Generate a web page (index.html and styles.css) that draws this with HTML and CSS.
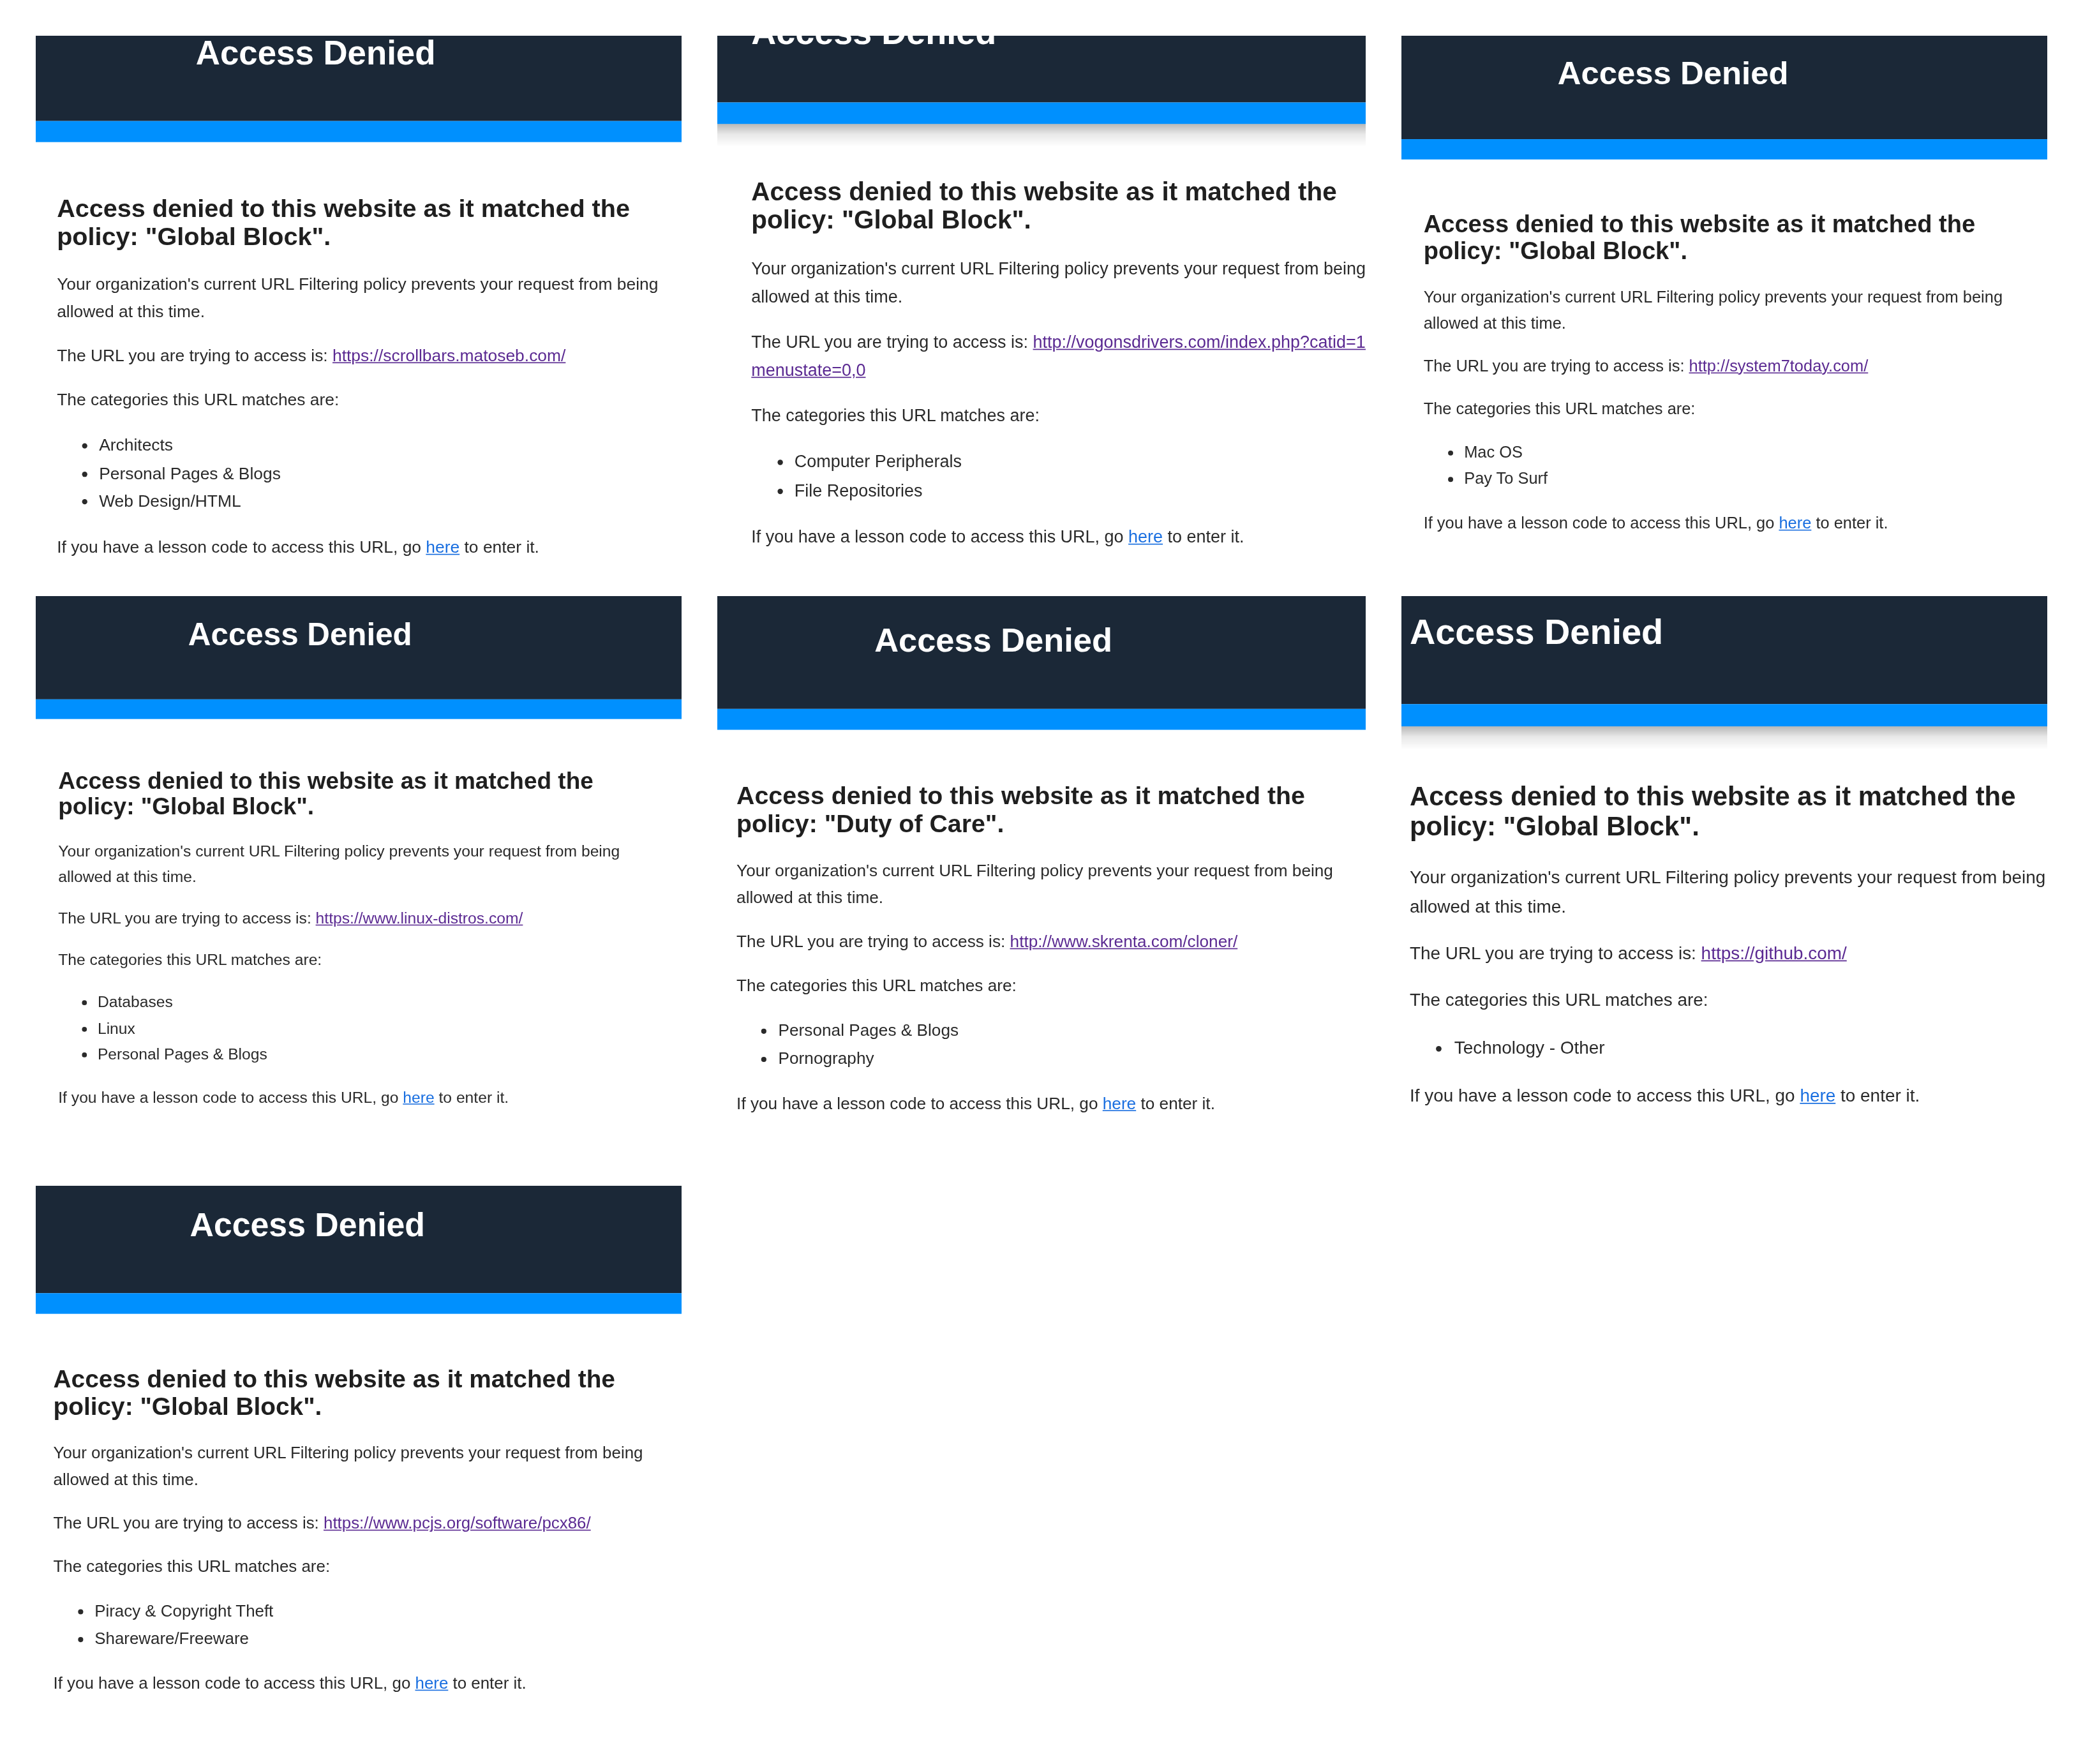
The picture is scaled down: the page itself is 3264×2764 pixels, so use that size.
FILE: index.html
```html
<!DOCTYPE html>
<html lang="en">
<head>
<meta charset="utf-8">
<title>Access Denied – screenshots</title>
<link rel="stylesheet" href="styles.css">
</head>
<body>
<main class="collage">

  <section class="shot shot-1">
    <div class="page">
      <header class="hdr"><h1 class="hdr-title">Access Denied</h1></header>
      <div class="bar"></div>
      <div class="content">
        <h2 class="msg">Access denied to this website as it matched the policy: "Global Block".</h2>
        <p>Your organization's current URL Filtering policy prevents your request from being allowed at this time.</p>
        <p>The URL you are trying to access is: <a class="url" href="#">https://scrollbars.matoseb.com/</a></p>
        <p>The categories this URL matches are:</p>
        <ul>
          <li>Architects</li>
          <li>Personal Pages &amp; Blogs</li>
          <li>Web Design/HTML</li>
        </ul>
        <p>If you have a lesson code to access this URL, go <a class="here" href="#">here</a> to enter it.</p>
      </div>
    </div>
  </section>

  <section class="shot shot-2">
    <div class="page">
      <header class="hdr"><h1 class="hdr-title">Access Denied</h1></header>
      <div class="bar"></div>
      <div class="content">
        <h2 class="msg">Access denied to this website as it matched the policy: "Global Block".</h2>
        <p>Your organization's current URL Filtering policy prevents your request from being allowed at this time.</p>
        <p>The URL you are trying to access is: <a class="url" href="#">http://vogonsdrivers.com/index.php?catid=1&amp;<wbr>menustate=0,0</a></p>
        <p>The categories this URL matches are:</p>
        <ul>
          <li>Computer Peripherals</li>
          <li>File Repositories</li>
        </ul>
        <p>If you have a lesson code to access this URL, go <a class="here" href="#">here</a> to enter it.</p>
      </div>
    </div>
  </section>

  <section class="shot shot-3">
    <div class="page">
      <header class="hdr"><h1 class="hdr-title">Access Denied</h1></header>
      <div class="bar"></div>
      <div class="content">
        <h2 class="msg">Access denied to this website as it matched the policy: "Global Block".</h2>
        <p>Your organization's current URL Filtering policy prevents your request from being allowed at this time.</p>
        <p>The URL you are trying to access is: <a class="url" href="#">http://system7today.com/</a></p>
        <p>The categories this URL matches are:</p>
        <ul>
          <li>Mac OS</li>
          <li>Pay To Surf</li>
        </ul>
        <p>If you have a lesson code to access this URL, go <a class="here" href="#">here</a> to enter it.</p>
      </div>
    </div>
  </section>

  <section class="shot shot-4">
    <div class="page">
      <header class="hdr"><h1 class="hdr-title">Access Denied</h1></header>
      <div class="bar"></div>
      <div class="content">
        <h2 class="msg">Access denied to this website as it matched the policy: "Global Block".</h2>
        <p>Your organization's current URL Filtering policy prevents your request from being allowed at this time.</p>
        <p>The URL you are trying to access is: <a class="url" href="#">https://www.linux-distros.com/</a></p>
        <p>The categories this URL matches are:</p>
        <ul>
          <li>Databases</li>
          <li>Linux</li>
          <li>Personal Pages &amp; Blogs</li>
        </ul>
        <p>If you have a lesson code to access this URL, go <a class="here" href="#">here</a> to enter it.</p>
      </div>
    </div>
  </section>

  <section class="shot shot-5">
    <div class="page">
      <header class="hdr"><h1 class="hdr-title">Access Denied</h1></header>
      <div class="bar"></div>
      <div class="content">
        <h2 class="msg">Access denied to this website as it matched the policy: "Duty of Care".</h2>
        <p>Your organization's current URL Filtering policy prevents your request from being allowed at this time.</p>
        <p>The URL you are trying to access is: <a class="url" href="#">http://www.skrenta.com/cloner/</a></p>
        <p>The categories this URL matches are:</p>
        <ul>
          <li>Personal Pages &amp; Blogs</li>
          <li>Pornography</li>
        </ul>
        <p>If you have a lesson code to access this URL, go <a class="here" href="#">here</a> to enter it.</p>
      </div>
    </div>
  </section>

  <section class="shot shot-6">
    <div class="page">
      <header class="hdr"><h1 class="hdr-title">Access Denied</h1></header>
      <div class="bar"></div>
      <div class="content">
        <h2 class="msg">Access denied to this website as it matched the policy: "Global Block".</h2>
        <p>Your organization's current URL Filtering policy prevents your request from being allowed at this time.</p>
        <p>The URL you are trying to access is: <a class="url" href="#">https://github.com/</a></p>
        <p>The categories this URL matches are:</p>
        <ul>
          <li>Technology - Other</li>
        </ul>
        <p>If you have a lesson code to access this URL, go <a class="here" href="#">here</a> to enter it.</p>
      </div>
    </div>
  </section>

  <section class="shot shot-7">
    <div class="page">
      <header class="hdr"><h1 class="hdr-title">Access Denied</h1></header>
      <div class="bar"></div>
      <div class="content">
        <h2 class="msg">Access denied to this website as it matched the policy: "Global Block".</h2>
        <p>Your organization's current URL Filtering policy prevents your request from being allowed at this time.</p>
        <p>The URL you are trying to access is: <a class="url" href="#">https://www.pcjs.org/software/pcx86/</a></p>
        <p>The categories this URL matches are:</p>
        <ul>
          <li>Piracy &amp; Copyright Theft</li>
          <li>Shareware/Freeware</li>
        </ul>
        <p>If you have a lesson code to access this URL, go <a class="here" href="#">here</a> to enter it.</p>
      </div>
    </div>
  </section>

</main>
</body>
</html>
```

FILE: styles.css
```css
html, body {
  margin: 0;
  padding: 0;
  background: #ffffff;
}

.collage {
  display: grid;
  grid-template-columns: 1012px 1016px 1012px;
  grid-template-rows: 822px 868px 850px;
  column-gap: 56px;
  row-gap: 56px;
  padding: 56px;
  width: 3264px;
  box-sizing: border-box;
}

/* one screenshot */
.shot {
  overflow: hidden;
  background: #ffffff;
  --s: 1.65;
  --hh: 102px;
  --tt: 19px;
  --tx: 152px;
  --cl: 20px;
}

.page {
  width: 700px;
  transform: scale(var(--s));
  transform-origin: 0 0;
  font-family: "Liberation Sans", Arial, sans-serif;
  font-size: 16px;
  color: #2a2a2a;
}

.hdr {
  height: var(--hh);
  background: #1b2837;
  overflow: hidden;
}

.hdr-title {
  margin: var(--tt) 0 0 0;
  padding-left: var(--tx);
  font-size: 32px;
  line-height: 37px;
  font-weight: bold;
  color: #ffffff;
  white-space: nowrap;
}

.bar {
  height: 20px;
  background: #0090fe;
  position: relative;
}

.content {
  width: 600px;
  padding: 31.5px 0 0 var(--cl);
}

.msg {
  margin: 19px 0 19.5px;
  font-size: 24px;
  line-height: 1.1;
  font-weight: bold;
  color: #1f1f1f;
}

.content p {
  margin: 16px 0;
  line-height: 26px;
}

.content ul {
  margin: 17px 0;
  padding-left: 40px;
  line-height: 26.5px;
}

.url {
  color: #5b2a92;
  text-decoration: underline;
}

.here {
  color: #1a6fe0;
  text-decoration: underline;
}

/* shadow under the bar on scrolled captures */
.shot-2 .bar::after,
.shot-6 .bar::after {
  content: "";
  position: absolute;
  left: 0;
  right: 0;
  top: 100%;
  height: 21px;
  background: linear-gradient(rgba(0, 0, 0, 0.28), rgba(0, 0, 0, 0.09) 45%, rgba(0, 0, 0, 0));
}

/* per-capture zoom, scroll offset and header layout */
.shot-1 { --s: 1.65;  --hh: 80.7px;  --tt: -2.3px;  --tx: 152px; --cl: 20.1px; }
.shot-2 { --s: 1.686; --hh: 61.6px;  --tt: -21.4px; --tx: 31.6px; --cl: 31.6px; }
.shot-3 { --s: 1.589; --hh: 102px;   --tt: 18.6px;  --tx: 154px; --cl: 21.8px; }
.shot-4 { --s: 1.541; --hh: 104.5px; --tt: 21.4px;  --tx: 155px; --cl: 22.9px; }
.shot-5 { --s: 1.637; --hh: 107.7px; --tt: 24px;    --tx: 150.4px; --cl: 18.4px; }
.shot-6 { --s: 1.745; --hh: 96.8px;  --tt: 13.6px;  --tx: 7.4px; --cl: 7.4px; }
.shot-7 { --s: 1.618; --hh: 103.7px; --tt: 20px;    --tx: 149.3px; --cl: 17px; }
```
